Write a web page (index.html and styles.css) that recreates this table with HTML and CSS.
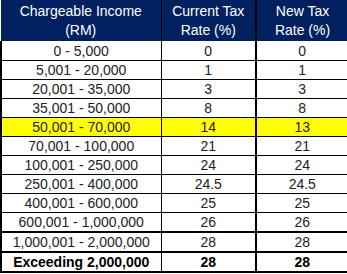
FILE: index.html
```html
<!DOCTYPE html>
<html>
<head>
<meta charset="utf-8">
<link rel="stylesheet" href="styles.css">
</head>
<body>
<table class="tax">
  <colgroup>
    <col class="c1"><col class="c2"><col class="c3">
  </colgroup>
  <thead>
    <tr>
      <th class="first">Chargeable Income<br>(RM)</th>
      <th class="mid">Current Tax<br>Rate (%)</th>
      <th>New Tax<br>Rate (%)</th>
    </tr>
  </thead>
  <tbody>
    <tr><td>0 - 5,000</td><td class="mid">0</td><td>0</td></tr>
    <tr><td>5,001 - 20,000</td><td class="mid">1</td><td>1</td></tr>
    <tr><td>20,001 - 35,000</td><td class="mid">3</td><td>3</td></tr>
    <tr><td>35,001 - 50,000</td><td class="mid">8</td><td>8</td></tr>
    <tr class="hl"><td>50,001 - 70,000</td><td class="mid">14</td><td>13</td></tr>
    <tr><td>70,001 - 100,000</td><td class="mid">21</td><td>21</td></tr>
    <tr><td>100,001 - 250,000</td><td class="mid">24</td><td>24</td></tr>
    <tr><td>250,001 - 400,000</td><td class="mid">24.5</td><td>24.5</td></tr>
    <tr><td>400,001 - 600,000</td><td class="mid">25</td><td>25</td></tr>
    <tr><td>600,001 - 1,000,000</td><td class="mid">26</td><td>26</td></tr>
    <tr class="thick"><td>1,000,001 - 2,000,000</td><td class="mid">28</td><td>28</td></tr>
    <tr class="last thick"><td>Exceeding 2,000,000</td><td class="mid">28</td><td>28</td></tr>
  </tbody>
</table>
</body>
</html>
```

FILE: styles.css
```css
html, body {
  margin: 0;
  padding: 0;
  background: #ffffff;
}

.tax {
  border-collapse: collapse;
  width: 347px;
  font-family: "Liberation Sans", Arial, sans-serif;
  font-size: 14px;
  table-layout: fixed;
}

.c1 { width: 160px; }
.c2 { width: 95px; }
.c3 { width: 92px; }

.tax th {
  background: #002060;
  color: #ffffff;
  font-weight: normal;
  line-height: 19px;
  height: 41px;
  padding: 0;
  text-align: center;
  vertical-align: middle;
}

.tax th.first {
  border-right: 1px solid #000;
}

.tax th.mid {
  border-right: 2px solid #000;
}

.tax td {
  height: 18px;
  line-height: 18px;
  padding: 0;
  text-align: center;
  color: #222;
  border-top: 1px solid #000;
  border-left: 1px solid #000;
  border-right: 1px solid #000;
}

.tax td:first-child {
  border-left: 2px solid #000;
}

.tax td.mid {
  border-right: 2px solid #000;
}

.tax tbody tr:first-child td {
  border-top: none;
  height: 19px;
}

.tax tr.hl td {
  background: #ffff00;
}

.tax tr.thick td {
  border-top: 2px solid #000;
}

.tax tr.last td {
  font-weight: bold;
  color: #000;
  border-bottom: 2px solid #000;
}
```
